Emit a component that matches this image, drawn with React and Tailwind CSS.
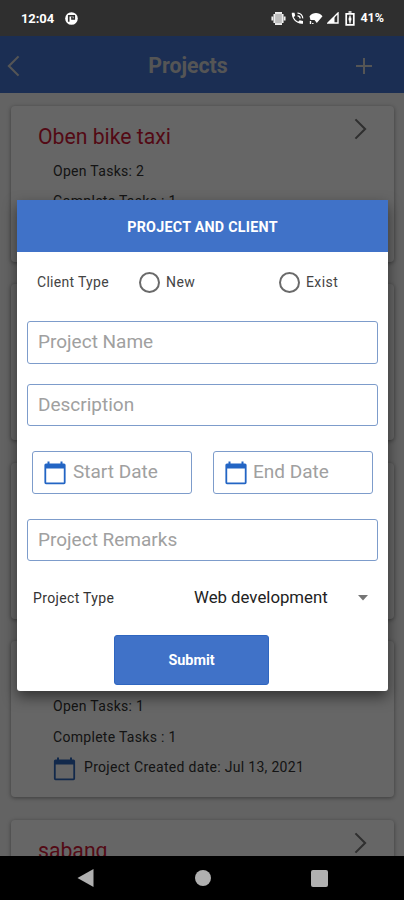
const projects = [
  { id: 1, title: "Oben bike taxi", open: 2, complete: 1 },
  { id: 2 },
  { id: 3 },
  { id: 4, open: 1, complete: 1, created: "Jul 13, 2021" },
  { id: 5, title: "sabang" },
];

const CalendarIcon = ({ className }) => (
  <svg viewBox="0 0 22 24" className={className}>
    <path
      fill="currentColor"
      d="M3.500.5h2v2h11v-2h2v2H20A1.600 1.600 0 0 1 21.600 4.100v17.500A1.600 1.600 0 0 1 20 23.200H2a1.600 1.600 0 0 1-1.600-1.600V4.100A1.600 1.600 0 0 1 2 2.500h1.500zM2.200 7.500v13.900h17.600V7.500z"
    />
  </svg>
);

const Chevron = ({ className }) => (
  <svg viewBox="0 0 14 24" fill="none" stroke="currentColor" strokeWidth="2.300" className={className}>
    <path d="M1.500 1.500 12 12 1.500 22.500" />
  </svg>
);

const StatusBar = () => (
  <div className="flex h-9 shrink-0 items-center bg-[#2f2f2f] pl-[21px] pr-5 text-white">
    <span className="text-[13px] font-bold leading-none tracking-[-0.1px]">12:04</span>
    <svg viewBox="0 0 14 14" className="ml-[11px] size-[13px]">
      <circle cx="7" cy="7" r="6.800" fill="#fff" />
      <path d="M4 10.500V4h6v3.500H7.500V5" fill="none" stroke="#2f2f2f" strokeWidth="1.700" />
    </svg>
    <div className="ml-auto flex items-center">
      <svg viewBox="0 0 15 13" className="h-[13px] w-[15px]">
        <path d="M4 .8h7v11.400H4z" fill="#bdbdbd" />
        <path d="M4 .8h7M4 12.200h7M3.300 2v9M11.700 2v9M1.300 4.500v4M13.700 4.500v4" stroke="#eee" strokeWidth="1.700" />
      </svg>
      <svg viewBox="0 0 13 13" className="ml-[5px] h-[13px] w-[13px]">
        <path
          fill="#fff"
          d="M.8.8h2.700l.7 3-1.500 1.500a9 9 0 0 0 4.500 4.500l1.500-1.500 3.300.7v2.700C6 12.700.3 7 .8.8z"
        />
        <path d="M6.500 1.200a5 5 0 0 1 5.200 5.200M6.500 3.800a2.600 2.600 0 0 1 2.600 2.600" fill="none" stroke="#fff" strokeWidth="1.300" />
      </svg>
      <svg viewBox="0 0 14 13" className="ml-[5px] h-[13px] w-[14px]">
        <path d="M.5 4.200C4-.2 10-.2 13.500 4.200L7.800 11 5.500 8 1.500 8z" fill="#fff" />
        <path d="M1.500 12V9M3.800 11v1" stroke="#fff" strokeWidth="1.400" />
      </svg>
      <svg viewBox="0 0 12 12" className="ml-1 size-[12px]">
        <path d="M11 1v10H1z" fill="none" stroke="#fff" strokeWidth="1.400" />
        <path d="M7.500 4.500V11H1z" fill="#fff" />
      </svg>
      <svg viewBox="0 0 10 15" className="ml-[6px] h-[15px] w-[10px]">
        <path d="M3.500 1h3M1.200 2.800h7.600v11H1.200z" fill="none" stroke="#fff" strokeWidth="1.700" />
        <path d="M5 4.500 3.800 8l1.200 4.500L6.200 8z" fill="#fff" stroke="#fff" strokeWidth=".6" />
      </svg>
      <span className="ml-[5px] pt-px text-[12.500px] font-bold leading-none">41%</span>
    </div>
  </div>
);

const ProjectCard = ({ title, open, complete, created }) => (
  <div className="h-[156px] shrink-0 rounded-[4px] bg-white pl-[27px] pr-[27px] pt-[12px] shadow-[0_1px_4px_rgba(0,0,0,0.4)]">
    <div className="flex h-[38px] justify-between">
      <span className="text-[21.200px] leading-[38px] text-[#d01836]">{title}</span>
      {title && <Chevron className="h-[22px] w-[13px] text-[#757575]" />}
    </div>
    {open && (
      <div className="pl-[15px] text-[14px] leading-[30.400px] tracking-[0.3px] text-[#333]">
        <div>Open Tasks: {open}</div>
        <div>Complete Tasks : {complete}</div>
        {created && (
          <div className="flex items-center">
            <CalendarIcon className="mt-[4px] h-6 w-[23px] text-[#2f66bb]" />
            <span className="ml-[8px]">Project Created date: {created}</span>
          </div>
        )}
      </div>
    )}
  </div>
);

const Field = ({ children, className = "" }) => (
  <div
    className={`flex items-center rounded-[3px] border border-[#7d9ccb] pb-[2px] text-[19px] leading-none text-[#a0a0a0] ${className}`}
  >
    {children}
  </div>
);

const Radio = ({ label }) => (
  <div className="flex w-[140px] shrink-0 items-center">
    <span className="size-[21px] rounded-full border-2 border-[#6a6a6a]" />
    <span className="ml-[6px] pt-px tracking-[0.4px]">{label}</span>
  </div>
);

const ProjectDialog = () => (
  <div className="mx-auto h-[491px] w-[371px] rounded-[3px] bg-white shadow-[0_6px_14px_rgba(0,0,0,0.5)]">
    <div className="flex h-[52px] items-center justify-center bg-[#4072c8] pt-[3px] text-[14.300px] font-bold tracking-[0.250px] text-white">
      PROJECT AND CLIENT
    </div>
    <div className="flex h-[60px] items-center pl-5 text-[14px] text-[#444]">
      <span className="w-[102px] shrink-0 pt-px tracking-[0.3px]">Client Type</span>
      <Radio label="New" />
      <Radio label="Exist" />
    </div>
    <div className="px-[10px] pt-[9px]">
      <Field className="h-[43px] pl-[10px]">Project Name</Field>
      <Field className="mt-5 h-[42px] pl-[10px]">Description</Field>
      <div className="mt-[25px] flex justify-between px-[5px]">
        <Field className="h-[43px] w-[160px] pl-[11px]">
          <CalendarIcon className="mr-[7px] mt-[2px] h-6 w-[22px] text-[#2365c4]" />
          Start Date
        </Field>
        <Field className="h-[43px] w-[160px] pl-[11px]">
          <CalendarIcon className="mr-[6px] mt-[2px] h-6 w-[22px] text-[#2365c4]" />
          End Date
        </Field>
      </div>
      <Field className="mt-[25px] h-[42px] pl-[10px]">Project Remarks</Field>
    </div>
    <div className="flex h-[74px] items-center pl-4 pr-5 text-[14px] text-[#333]">
      <span className="w-[161px] tracking-[0.350px]">Project Type</span>
      <span className="text-[16.800px] text-[#222]">Web development</span>
      <svg viewBox="0 0 10 6" className="ml-auto h-[6px] w-[10px]">
        <path d="M0 0h10L5 5.500z" fill="#757575" />
      </svg>
    </div>
    <button className="ml-[97px] flex h-[50px] w-[155px] items-center justify-center rounded-[3px] border border-[#2f66c0] bg-[#4072c8] pt-[2px] text-[14.400px] font-bold text-white">
      Submit
    </button>
  </div>
);

const NavBar = () => (
  <div className="flex h-11 shrink-0 items-center justify-between bg-black pl-[77px] pr-[76px] text-[#b0b0b0]">
    <svg viewBox="0 0 17 18" className="h-[18px] w-[17px]">
      <path d="M16.500 0v18L.5 9z" fill="currentColor" />
    </svg>
    <span className="size-4 rounded-full bg-current" />
    <span className="size-[17px] rounded-[2px] bg-current" />
  </div>
);

export default function App() {
  return (
    <div className="flex h-[900px] w-[404px] flex-col overflow-hidden font-['Roboto',sans-serif]">
      <StatusBar />
      <div className="relative flex h-[820px] flex-col overflow-hidden bg-[#f7f7f7]">
        <div className="flex h-[57px] shrink-0 items-center justify-between bg-[#4474cf] pl-[7px] pr-[32px] pt-[2px] text-[#d5d5d5]">
          <Chevron className="h-[22px] w-[13px] rotate-180" />
          <span className="pt-px text-[21.300px] font-bold">Projects</span>
          <svg viewBox="0 0 16 16" className="size-4">
            <path d="M8 0v16M0 8h16" stroke="currentColor" strokeWidth="2" />
          </svg>
        </div>
        <div className="flex flex-col gap-[22.600px] pl-[11px] pr-[10px] pt-[12.500px]">
          {projects.map((p) => (
            <ProjectCard key={p.id} {...p} />
          ))}
        </div>
        <div className="absolute inset-0 bg-black/60 pl-px pr-0 pt-[164px]">
          <ProjectDialog />
        </div>
      </div>
      <NavBar />
    </div>
  );
}
